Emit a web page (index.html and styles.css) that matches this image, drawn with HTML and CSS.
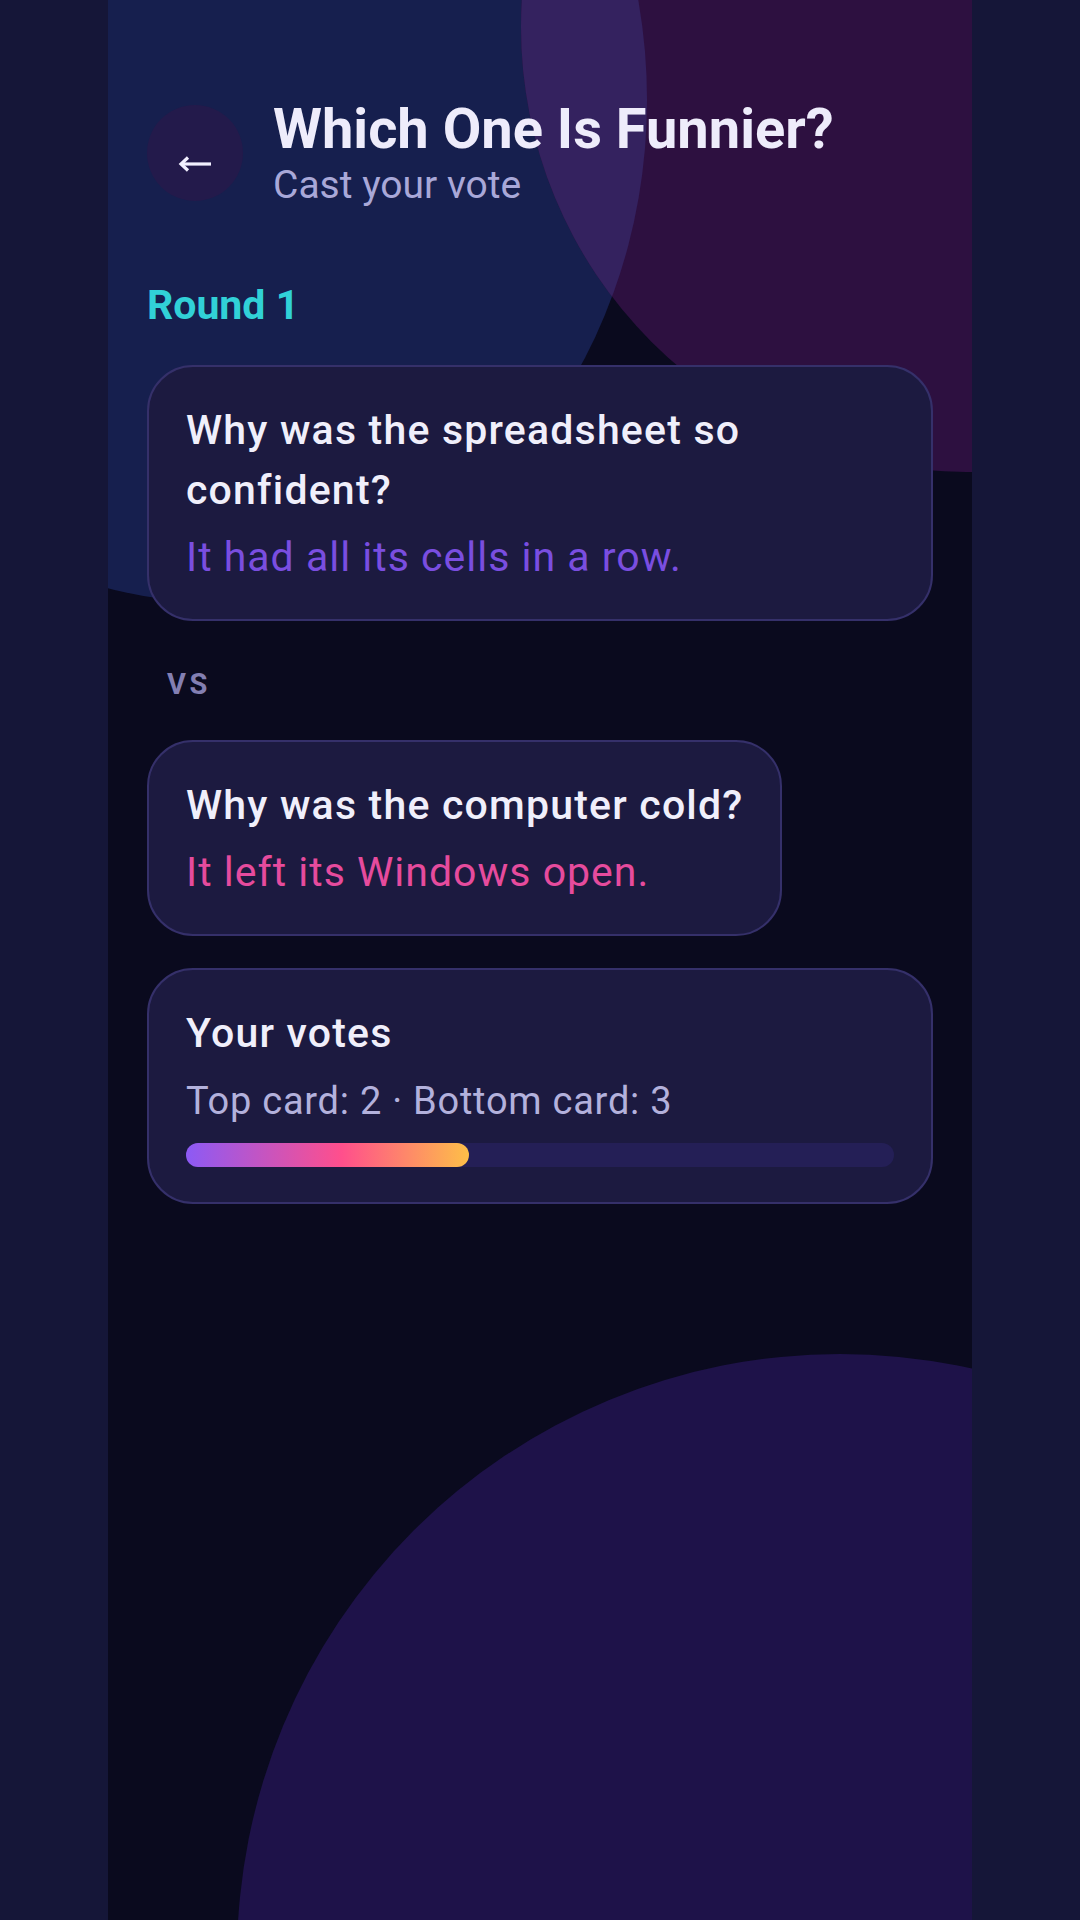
FILE: index.html
```html
<html>

<head>
    <meta charset="utf-8">
    <link rel="stylesheet" href="styles.css">
</head>

<body>
    <div class="screen">
        <svg class="backdrop" viewBox="0 0 864 1920" width="864" height="1920">
            <defs>
                <clipPath id="blueBlob">
                    <ellipse cx="102" cy="100" rx="437" ry="502" />
                </clipPath>
            </defs>
            <ellipse cx="102" cy="100" rx="437" ry="502" fill="#161f4e" />
            <circle cx="858" cy="27" r="445" fill="#2d1040" />
            <!-- where the two top blobs overlap -->
            <circle cx="858" cy="27" r="445" fill="#34225f" clip-path="url(#blueBlob)" />
            <circle cx="732" cy="1957" r="603" fill="#1e1249" />
        </svg>

        <div class="content">
            <div class="topbar">
                <div class="back-btn">
                    <svg width="34" height="16" viewBox="0 0 34 16">
                        <path d="M33 8H4" stroke="#f2f0ff" stroke-width="3.2" fill="none" />
                        <path d="M10 1.5L3 8l7 6.5" stroke="#f2f0ff" stroke-width="3.2" fill="none" />
                    </svg>
                </div>
                <div class="heading">
                    <div class="title">Which One Is Funnier?</div>
                    <div class="subtitle">Cast your vote</div>
                </div>
            </div>

            <div class="round-label">Round 1</div>

            <div class="joke-card">
                <div class="joke-q">Why was the spreadsheet so confident?</div>
                <div class="joke-a violet">It had all its cells in a row.</div>
            </div>

            <div class="versus">VS</div>

            <div class="joke-card fit">
                <div class="joke-q">Why was the computer cold?</div>
                <div class="joke-a pink">It left its Windows open.</div>
            </div>

            <div class="joke-card tally">
                <div class="joke-q">Your votes</div>
                <div class="tally-text">Top card: 2 · Bottom card: 3</div>
                <div class="meter">
                    <div class="meter-fill" style="width: 40%"></div>
                </div>
            </div>
        </div>
    </div>
</body>

</html>
```

FILE: styles.css
```css
body {
    margin: 0;
    padding: 0;
    background: #151638;
    font-family: Roboto, "Noto Sans", sans-serif;
}

.screen {
    position: relative;
    width: 864px;
    height: 1920px;
    margin: 0 auto;
    overflow: hidden;
    background: #0a0a1e;
}

.backdrop {
    position: absolute;
    top: 0;
    left: 0;
}

.content {
    position: relative;
    padding: 97px 39px 0 39px;
}

.topbar {
    display: flex;
    align-items: center;
    gap: 30px;
}

.back-btn {
    width: 96px;
    height: 96px;
    border-radius: 50%;
    background: #231a4b;
    display: flex;
    align-items: center;
    justify-content: center;
    flex-shrink: 0;
}

.back-btn svg {
    margin-top: 22px;
}

.title {
    font-size: 56px;
    line-height: 64px;
    font-weight: 700;
    color: #eeecfb;
}

.subtitle {
    font-size: 39px;
    line-height: 48px;
    color: #a9a8d8;
}

.round-label {
    margin-top: 72px;
    font-size: 41px;
    line-height: 48px;
    font-weight: 700;
    color: #31d1d7;
}

.joke-card {
    margin-top: 36px;
    padding: 33px 37px 32px 37px;
    border: 2px solid #35306a;
    border-radius: 46px;
    background: #1c1a40;
}

.joke-card.fit {
    width: fit-content;
    margin-top: 38px;
}

.joke-q {
    font-size: 41px;
    line-height: 60px;
    font-weight: 500;
    letter-spacing: 1.2px;
    color: #f0effb;
}

.joke-a {
    margin-top: 7px;
    font-size: 41px;
    line-height: 60px;
    letter-spacing: 1px;
}

.joke-a.violet {
    color: #7a4ee0;
}

.joke-a.pink {
    color: #e64b9d;
}

.versus {
    margin: 45px 0 0 20px;
    font-size: 29px;
    line-height: 36px;
    font-weight: 700;
    letter-spacing: 3.5px;
    color: #837fb2;
}

.joke-card.tally {
    margin-top: 32px;
    padding-bottom: 35px;
}

.tally-text {
    margin-top: 12px;
    font-size: 38px;
    line-height: 52px;
    letter-spacing: 0.75px;
    color: #b3b1dc;
}

.meter {
    margin-top: 16px;
    height: 24px;
    border-radius: 12px;
    background: #241f56;
}

.meter-fill {
    height: 100%;
    border-radius: 12px;
    background: linear-gradient(90deg, #8c5af5 0%, #ff4f8c 55%, #fdbf48 100%);
}
```
